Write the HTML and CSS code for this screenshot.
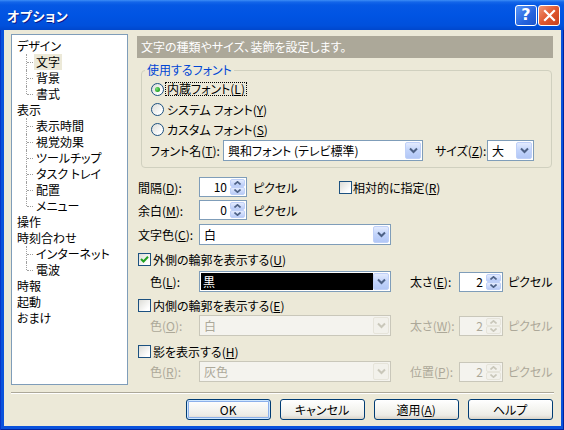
FILE: index.html
```html
<!DOCTYPE html>
<html lang="ja">
<head>
<meta charset="utf-8">
<title>オプション</title>
<link rel="stylesheet" href="styles.css">
</head>
<body>
<div class="window">
  <div class="titlebar">
    <span class="title">オプション</span>
    <div class="tbtns">
      <span class="tbtn help">?</span>
      <span class="tbtn close"><svg width="13" height="13" viewBox="0 0 13 13"><path d="M2 2 L11 11 M11 2 L2 11" stroke="#fff" stroke-width="2.2" stroke-linecap="square"/></svg></span>
    </div>
  </div>
  <div class="frame">
    <div class="client">
      <div class="main">
        <ul class="tree">
          <li><div class="node">デザイン</div>
            <ul class="kids">
              <li><span class="sel">文字</span></li>
              <li><span>背景</span></li>
              <li><span>書式</span></li>
            </ul>
          </li>
          <li><div class="node">表示</div>
            <ul class="kids">
              <li><span>表示時間</span></li>
              <li><span>視覚効果</span></li>
              <li><span>ツールチップ</span></li>
              <li><span>タスク トレイ</span></li>
              <li><span>配置</span></li>
              <li><span>メニュー</span></li>
            </ul>
          </li>
          <li><div class="node">操作</div></li>
          <li><div class="node">時刻合わせ</div>
            <ul class="kids">
              <li><span>インターネット</span></li>
              <li><span>電波</span></li>
            </ul>
          </li>
          <li><div class="node">時報</div></li>
          <li><div class="node">起動</div></li>
          <li><div class="node">おまけ</div></li>
        </ul>

        <div class="panel">
          <div class="band">文字の種類やサイズ、装飾を設定します。</div>
          <fieldset class="group">
            <legend>使用するフォント</legend>
            <div class="gbody">
              <div class="rrow"><span class="radio on"></span><span class="focus">内蔵フォント(<u>L</u>)</span></div>
              <div class="rrow"><span class="radio"></span><span class="rtext">システム フォント(<u>Y</u>)</span></div>
              <div class="rrow"><span class="radio"></span><span class="rtext">カスタム フォント(<u>S</u>)</span></div>
              <div class="frow">
                <span class="lbl-fn">フォント名(<u>T</u>):</span>
                <div class="combo w-fn"><span class="val">興和フォント (テレビ標準)</span><span class="arrow"><svg width="9" height="7" viewBox="0 0 9 7"><path d="M1 1.5 L4.5 5 L8 1.5" fill="none" stroke="#4D6185" stroke-width="2"/></svg></span></div>
                <span class="lbl-size">サイズ(<u>Z</u>):</span>
                <div class="combo w-size"><span class="val">大</span><span class="arrow"><svg width="9" height="7" viewBox="0 0 9 7"><path d="M1 1.5 L4.5 5 L8 1.5" fill="none" stroke="#4D6185" stroke-width="2"/></svg></span></div>
              </div>
            </div>
          </fieldset>

          <div class="row r-space">
            <span class="lbl">間隔(<u>D</u>):</span>
            <div class="spin"><span class="num">10</span><span class="sbtns"><span class="sb"><svg width="7" height="4" viewBox="0 0 7 4"><path d="M0.5 3.5 L3.5 0.8 L6.5 3.5" fill="none" stroke="#4D6185" stroke-width="1.6"/></svg></span><span class="sb"><svg width="7" height="4" viewBox="0 0 7 4"><path d="M0.5 0.5 L3.5 3.2 L6.5 0.5" fill="none" stroke="#4D6185" stroke-width="1.6"/></svg></span></span></div>
            <span class="unit u-wide">ピクセル</span>
            <span class="cb"></span><span class="cbl">相対的に指定(<u>R</u>)</span>
          </div>
          <div class="row r-margin">
            <span class="lbl">余白(<u>M</u>):</span>
            <div class="spin"><span class="num">0</span><span class="sbtns"><span class="sb"><svg width="7" height="4" viewBox="0 0 7 4"><path d="M0.5 3.5 L3.5 0.8 L6.5 3.5" fill="none" stroke="#4D6185" stroke-width="1.6"/></svg></span><span class="sb"><svg width="7" height="4" viewBox="0 0 7 4"><path d="M0.5 0.5 L3.5 3.2 L6.5 0.5" fill="none" stroke="#4D6185" stroke-width="1.6"/></svg></span></span></div>
            <span class="unit">ピクセル</span>
          </div>
          <div class="row r-color">
            <span class="lbl">文字色(<u>C</u>):</span>
            <div class="combo w-col"><span class="val">白</span><span class="arrow"><svg width="9" height="7" viewBox="0 0 9 7"><path d="M1 1.5 L4.5 5 L8 1.5" fill="none" stroke="#4D6185" stroke-width="2"/></svg></span></div>
          </div>

          <div class="row r-check r-outer">
            <span class="cb"><svg width="11" height="11" viewBox="0 0 11 11"><path d="M2 5 L4.5 7.5 L9 2.8" fill="none" stroke="#21A121" stroke-width="2"/></svg></span><span class="cbl">外側の輪郭を表示する(<u>U</u>)</span>
          </div>
          <div class="row r-sub">
            <span class="lbl sub">色(<u>L</u>):</span>
            <div class="combo w-col"><span class="val black">黒</span><span class="arrow"><svg width="9" height="7" viewBox="0 0 9 7"><path d="M1 1.5 L4.5 5 L8 1.5" fill="none" stroke="#4D6185" stroke-width="2"/></svg></span></div>
            <span class="lbl2">太さ(<u>E</u>):</span>
            <div class="spin s-small"><span class="num">2</span><span class="sbtns"><span class="sb"><svg width="7" height="4" viewBox="0 0 7 4"><path d="M0.5 3.5 L3.5 0.8 L6.5 3.5" fill="none" stroke="#4D6185" stroke-width="1.6"/></svg></span><span class="sb"><svg width="7" height="4" viewBox="0 0 7 4"><path d="M0.5 0.5 L3.5 3.2 L6.5 0.5" fill="none" stroke="#4D6185" stroke-width="1.6"/></svg></span></span></div>
            <span class="unit2">ピクセル</span>
          </div>

          <div class="row r-check r-inner">
            <span class="cb"></span><span class="cbl">内側の輪郭を表示する(<u>E</u>)</span>
          </div>
          <div class="row r-sub r-sub1 dis">
            <span class="lbl sub">色(<u>O</u>):</span>
            <div class="combo w-col"><span class="val">白</span><span class="arrow"><svg width="9" height="7" viewBox="0 0 9 7"><path d="M1 1.5 L4.5 5 L8 1.5" fill="none" stroke="#C9C7BA" stroke-width="2"/></svg></span></div>
            <span class="lbl2">太さ(<u>W</u>):</span>
            <div class="spin s-small"><span class="num">2</span><span class="sbtns"><span class="sb"><svg width="7" height="4" viewBox="0 0 7 4"><path d="M0.5 3.5 L3.5 0.8 L6.5 3.5" fill="none" stroke="#C9C7BA" stroke-width="1.6"/></svg></span><span class="sb"><svg width="7" height="4" viewBox="0 0 7 4"><path d="M0.5 0.5 L3.5 3.2 L6.5 0.5" fill="none" stroke="#C9C7BA" stroke-width="1.6"/></svg></span></span></div>
            <span class="unit2">ピクセル</span>
          </div>

          <div class="row r-check r-shadow">
            <span class="cb"></span><span class="cbl">影を表示する(<u>H</u>)</span>
          </div>
          <div class="row r-sub r-sub1 dis">
            <span class="lbl sub">色(<u>R</u>):</span>
            <div class="combo w-col"><span class="val">灰色</span><span class="arrow"><svg width="9" height="7" viewBox="0 0 9 7"><path d="M1 1.5 L4.5 5 L8 1.5" fill="none" stroke="#C9C7BA" stroke-width="2"/></svg></span></div>
            <span class="lbl2">位置(<u>P</u>):</span>
            <div class="spin s-small"><span class="num">2</span><span class="sbtns"><span class="sb"><svg width="7" height="4" viewBox="0 0 7 4"><path d="M0.5 3.5 L3.5 0.8 L6.5 3.5" fill="none" stroke="#C9C7BA" stroke-width="1.6"/></svg></span><span class="sb"><svg width="7" height="4" viewBox="0 0 7 4"><path d="M0.5 0.5 L3.5 3.2 L6.5 0.5" fill="none" stroke="#C9C7BA" stroke-width="1.6"/></svg></span></span></div>
            <span class="unit2">ピクセル</span>
          </div>
        </div>
      </div>
      <div class="sep"></div>
      <div class="buttons">
        <span class="btn def">OK</span>
        <span class="btn">キャンセル</span>
        <span class="btn">適用(<u>A</u>)</span>
        <span class="btn">ヘルプ</span>
      </div>
    </div>
  </div>
</div>
</body>
</html>
```

FILE: styles.css
```css
* { box-sizing: border-box; }
html, body { margin: 0; padding: 0; }
body {
  width: 564px; height: 430px; overflow: hidden; background: #fff;
  font-family: "Noto Sans CJK JP", "Noto Sans", sans-serif;
  font-size: 12px; color: #000;
  font-feature-settings: "palt" 1;
}
u { text-decoration: underline; text-underline-offset: 1px; text-decoration-thickness: 1px; }

.window { width: 564px; height: 430px; display: flex; flex-direction: column; }

.titlebar {
  height: 30px; flex: none; display: flex; align-items: center;
  padding: 0 4px 0 7px;
  background: linear-gradient(#3D8DF6 0, #1466E9 2px, #0558E4 5px, #0054E3 50%, #0050DC 85%, #0047CC 100%);
}
.title { flex: 1; color: #fff; font-weight: bold; font-size: 13px; text-shadow: 1px 1px 0 #0A1A8A; letter-spacing: 0.5px; }
.tbtns { display: flex; gap: 1px; }
.tbtn {
  width: 22px; height: 21px; border: 1px solid #fff; border-radius: 3px;
  display: flex; align-items: center; justify-content: center;
}
.help { background: linear-gradient(135deg, #5A97F8, #2563DE 60%, #1B54CC); color: #fff; font-weight: bold; font-size: 16px; font-family: "DejaVu Sans", sans-serif; line-height: 1; }
.close { background: linear-gradient(135deg, #F09777, #E0582F 50%, #C8401C); }

.frame {
  flex: 1; display: flex; padding: 0 4px 4px;
  background: #0A52DC;
  box-shadow: inset 1px 0 #0836C8, inset -1px 0 #00249E, inset 0 -1px #00249E;
}
.client {
  flex: 1; background: #ECE9D8; display: flex; flex-direction: column;
  padding: 4px 7px 6px 7px;
}
.main { display: flex; height: 351px; gap: 9px; padding-right: 1px; }

/* tree */
.tree { width: 117px; flex: none; border: 1px solid #7F9DB9; background: #fff; margin: 0; padding: 3px 0 0 0; list-style: none; }
.tree li { list-style: none; }
.node { height: 16px; line-height: 16px; padding-left: 5px; white-space: nowrap; }
.kids { margin: 0; padding: 0; }
.kids li { position: relative; height: 16px; line-height: 16px; padding-left: 22px; white-space: nowrap; }
.kids li::before { content: ""; position: absolute; left: 14px; top: 0; bottom: 0; border-left: 1px dotted #A0A0A0; }
.kids li:last-child::before { bottom: 8px; }
.kids li::after { content: ""; position: absolute; left: 15px; top: 8px; width: 6px; border-top: 1px dotted #A0A0A0; }
.kids span { display: inline-block; padding: 0 2px; height: 16px; }
.sel { background: #ECE9D8; }

/* panel */
.panel { flex: 1; display: flex; flex-direction: column; padding-top: 2px; white-space: nowrap; }
.band { height: 22px; line-height: 22px; background: #ACA899; color: #fff; padding-left: 4px; flex: none; }

.group { margin: 4px 1px 0 4px; padding: 1px 0 6px 0; border: 1px solid #D0D0BF; border-radius: 4px; min-width: 0; }
.group legend { margin-left: 3px; padding: 0 2px; color: #0046D5; line-height: 16px; height: 16px; }
.gbody { padding-left: 9px; }
.rrow { height: 20px; display: flex; align-items: center; gap: 2px; }
.radio {
  width: 13px; height: 13px; border-radius: 50%; border: 1px solid #1C5180; flex: none;
  background: linear-gradient(135deg, #DCDCD7, #FFFFFF 80%);
  display: flex; align-items: center; justify-content: center;
}
.radio.on::after { content: ""; width: 5px; height: 5px; border-radius: 50%; background: radial-gradient(circle at 35% 35%, #7BE07B, #21A121 70%); }
.focus { outline: 1px dotted #000; line-height: 12px; padding: 0 1px; }
.rtext { padding: 0 1px; }

.frow { display: flex; align-items: center; height: 21px; margin-top: 1px; margin-left: -1px; }
.lbl-fn { width: 73px; flex: none; }
.lbl-size { width: 52px; margin-left: 12px; flex: none; }
.w-fn { width: 200px; }
.w-size { width: 47px; }

.combo { height: 21px; border: 1px solid #7F9DB9; background: #fff; display: flex; padding: 1px; flex: none; }
.combo .val { flex: 1; padding-left: 3px; line-height: 17px; white-space: nowrap; overflow: hidden; }
.combo .val.black { background: #000; color: #fff; padding-left: 2px; }
.arrow {
  width: 16px; height: 17px; flex: none; border-radius: 2px;
  background: linear-gradient(#E3EBFE, #C2D4FB 50%, #B2C7F6);
  border: 1px solid #BFD0F8;
  display: flex; align-items: center; justify-content: center;
}

.row { display: flex; align-items: center; margin-left: 1px; flex: none; }
.lbl { width: 61px; flex: none; }
.lbl.sub { width: 49px; margin-left: 12px; }
.r-space { height: 20px; margin-top: 9px; }
.r-margin { height: 20px; margin-top: 3px; }
.r-color { height: 21px; margin-top: 4px; }
.r-check { height: 18px; gap: 2px; }
.r-outer { margin-top: 5px; }
.r-inner { margin-top: 4px; }
.r-shadow { margin-top: 6px; }
.r-sub { height: 21px; margin-top: 3px; }
.r-sub1 { margin-top: 1px; }
.w-col { width: 192px; }
.lbl2 { width: 49px; margin-left: 19px; flex: none; }
.unit { margin-left: 6px; }
.u-wide { width: 86px; flex: none; }
.unit2 { margin-left: 5px; white-space: nowrap; flex: none; }

.spin { width: 48px; height: 20px; border: 1px solid #7F9DB9; background: #fff; display: flex; padding: 1px; flex: none; }
.spin.s-small { width: 44px; }
.spin .num { flex: 1; text-align: right; padding-right: 3px; line-height: 16px; }
.sbtns { width: 15px; display: flex; flex-direction: column; flex: none; }
.sb {
  flex: 1; border-radius: 2px; border: 1px solid #BFD0F8;
  background: linear-gradient(#E3EBFE, #B8CBF7);
  display: flex; align-items: center; justify-content: center;
}

.cb {
  width: 13px; height: 13px; border: 1px solid #1C5180; flex: none;
  background: linear-gradient(135deg, #DCDCD7, #FFFFFF 80%);
  display: flex; align-items: center; justify-content: center;
}
.cbl { white-space: nowrap; }
.r-space .cb { margin-right: 1px; }

.dis { color: #ACA899; }
.dis .combo, .dis .spin { border-color: #C9C7BA; background: #F4F3EE; }
.dis .arrow, .dis .sb { background: #F2F1EB; border-color: #E6E4DA; }

.sep { height: 2px; margin-top: 7px; border-top: 1px solid #ACA899; border-bottom: 1px solid #fff; flex: none; }
.buttons { display: flex; justify-content: flex-end; gap: 9px; margin-top: 5px; padding-right: 1px; }
.btn {
  width: 85px; height: 21px; border: 1px solid #003C74; border-radius: 3px;
  background: linear-gradient(#FFFFFF, #F4F4F0 50%, #ECEBE6 80%, #D8D3C8);
  display: flex; align-items: center; justify-content: center; line-height: 1;
}
.btn.def { box-shadow: inset 0 0 0 1px #CEE7FF, inset 0 0 0 2px #8CB0EA; }
```
